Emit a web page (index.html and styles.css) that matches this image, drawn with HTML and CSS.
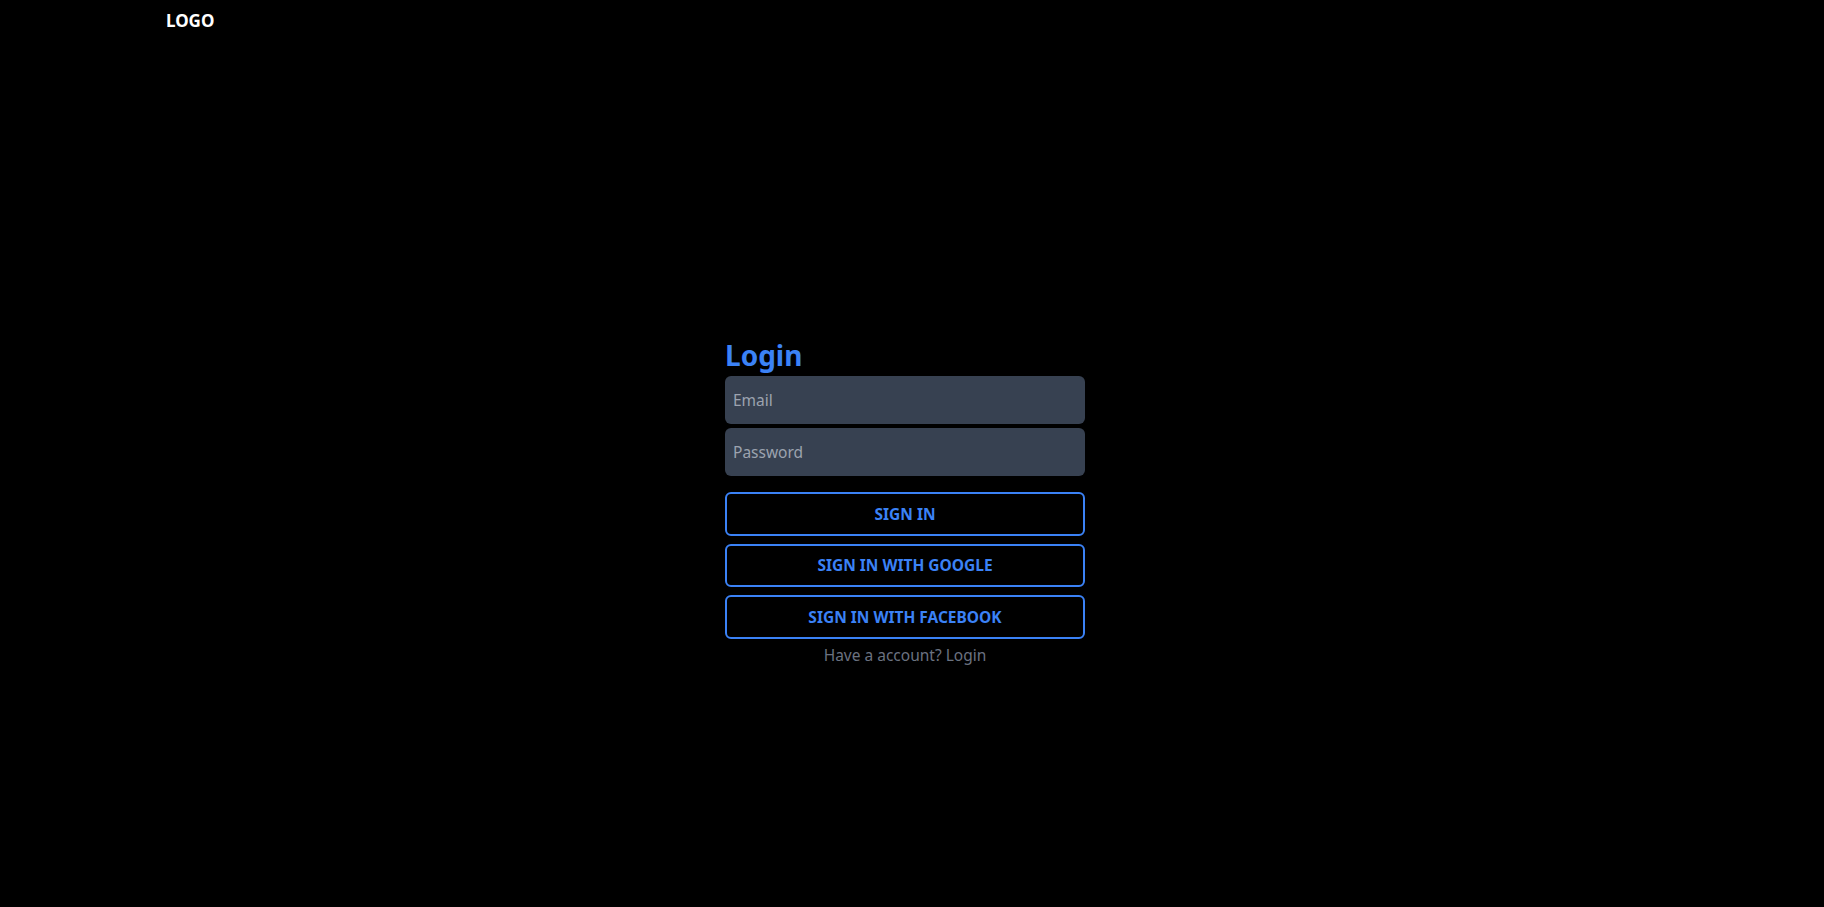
FILE: index.html
```html
<!DOCTYPE html>
<html lang="en">
<head>
<meta charset="utf-8">
<title>Login</title>
<link rel="stylesheet" href="styles.css">
</head>
<body>
<div class="page">
  <header class="header">
    <div class="logo">LOGO</div>
  </header>
  <main class="main">
    <form class="form">
      <h1 class="title">Login</h1>
      <div class="fields">
        <input class="input" type="email" placeholder="Email">
        <input class="input" type="password" placeholder="Password">
      </div>
      <div class="buttons">
        <button class="btn" type="button">SIGN IN</button>
        <button class="btn" type="button">SIGN IN WITH GOOGLE</button>
        <button class="btn" type="button">SIGN IN WITH FACEBOOK</button>
      </div>
      <p class="note">Have a account? Login</p>
    </form>
  </main>
</div>
</body>
</html>
```
FILE: styles.css
```css
* { box-sizing: border-box; }
html, body { margin: 0; padding: 0; background: #000; }
body { font-family: "Noto Sans", "Open Sans", sans-serif; color: #fff; }
.page { min-height: 100vh; background: #000; }
.header { height: 40px; padding-left: 166px; display: flex; align-items: flex-start; }
.logo { font-size: 17px; font-weight: 700; line-height: 24px; padding-top: 9px; color: #fff; }
.main { display: flex; justify-content: center; padding-top: 297px; padding-right: 14px; }
.form { width: 360px; display: flex; flex-direction: column; margin: 0; }
.title { margin: 0 0 3px 0; font-size: 28px; font-weight: 700; line-height: 36px; height: 36px; color: #3b82f6; }
.fields { display: flex; flex-direction: column; gap: 4px; }
.input { height: 48px; width: 100%; border: none; border-radius: 6px; background: #374151; padding: 0 8px; font-family: inherit; font-size: 15.5px; color: #e5e7eb; outline: none; }
.input::placeholder { color: #9ca3af; }
.buttons { display: flex; flex-direction: column; gap: 8px; margin-top: 16px; }
.btn { height: 43.5px; width: 100%; background: transparent; border: 2px solid #3b82f6; border-radius: 6px; color: #3b82f6; font-family: inherit; font-size: 15.5px; font-weight: 700; letter-spacing: 0; cursor: pointer; }
.note { margin: 4px 0 0; text-align: center; font-size: 15.5px; line-height: 24px; color: #6b7280; }
```
